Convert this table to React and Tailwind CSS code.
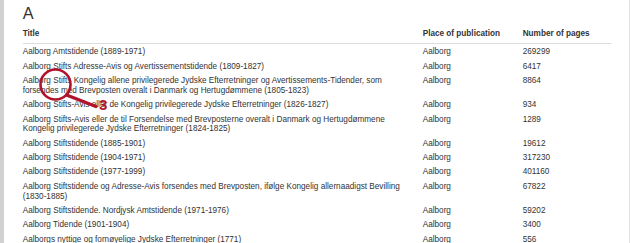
import React from "react";

const rows = [
  { title: ["Aalborg Amtstidende (1889-1971)"], pages: "269299" },
  { title: ["Aalborg Stifts Adresse-Avis og Avertissementstidende (1809-1827)"], pages: "6417" },
  {
    title: [
      "Aalborg Stifts Kongelig allene privilegerede Jydske Efterretninger og Avertissements-Tidender, som",
      "forsendes med Brevposten overalt i Danmark og Hertugdømmene (1805-1823)",
    ],
    pages: "8864",
  },
  { title: ["Aalborg Stifts-Avis eller de Kongelig privilegerede Jydske Efterretninger (1826-1827)"], pages: "934" },
  {
    title: [
      "Aalborg Stifts-Avis eller de til Forsendelse med Brevposterne overalt i Danmark og Hertugdømmene",
      "Kongelig privilegerede Jydske Efterretninger (1824-1825)",
    ],
    pages: "1289",
  },
  { title: ["Aalborg Stiftstidende (1885-1901)"], pages: "19612" },
  { title: ["Aalborg Stiftstidende (1904-1971)"], pages: "317230" },
  { title: ["Aalborg Stiftstidende (1977-1999)"], pages: "401160" },
  {
    title: [
      "Aalborg Stiftstidende og Adresse-Avis forsendes med Brevposten, ifølge Kongelig allernaadigst Bevilling",
      "(1830-1885)",
    ],
    pages: "67822",
  },
  { title: ["Aalborg Stiftstidende. Nordjysk Amtstidende (1971-1976)"], pages: "59202" },
  { title: ["Aalborg Tidende (1901-1904)"], pages: "3400" },
  { title: ["Aalborgs nyttige og fornøyelige Jydske Efterretninger (1771)"], pages: "556" },
];

export default function App() {
  return (
    <div className="relative flex w-[630px] h-[243px] overflow-hidden bg-white text-[#333] font-['Liberation_Sans',Arial,sans-serif]">
      <div className="w-[4px] shrink-0 bg-[#d2d2d2]" />
      <div className="flex-1 border-r border-[#e2e2e2] pl-[18.7px] pt-[4.3px]">
        <h1 className="text-[16.3px] leading-[18px] font-normal">A</h1>
        <div className="w-[588px] mt-[6.8px] text-[8.2px] leading-[9.7px]">
          <div className="grid grid-cols-[400px_100px_88px] font-bold pb-[4.2px] border-b border-[#dddddd]">
            <div>Title</div>
            <div>Place of publication</div>
            <div>Number of pages</div>
          </div>
          <div className="pt-[1px]">
            {rows.map((r, i) => (
              <div key={i} className="grid grid-cols-[400px_100px_88px] pt-[2.3px] pb-[2.4px]">
                <div className="whitespace-nowrap">
                  {r.title.map((line, j) => (
                    <div key={j}>{line}</div>
                  ))}
                </div>
                <div>Aalborg</div>
                <div>{r.pages}</div>
              </div>
            ))}
          </div>
        </div>
      </div>

      {/* magnifier callout drawn over the list */}
      <svg
        className="absolute left-0 top-0 pointer-events-none"
        width="630"
        height="243"
        viewBox="0 0 630 243"
      >
        <circle cx="55.5" cy="84.5" r="15" fill="none" stroke="#b0142c" strokeWidth="2.6" />
        <line x1="66.5" y1="95" x2="96" y2="106.5" stroke="#b0142c" strokeWidth="3.4" strokeLinecap="round" />
      </svg>
      <span className="absolute left-[99px] top-[97.3px] text-[15px] leading-[15px] font-bold text-[#b0142c]">
        3
      </span>
    </div>
  );
}
